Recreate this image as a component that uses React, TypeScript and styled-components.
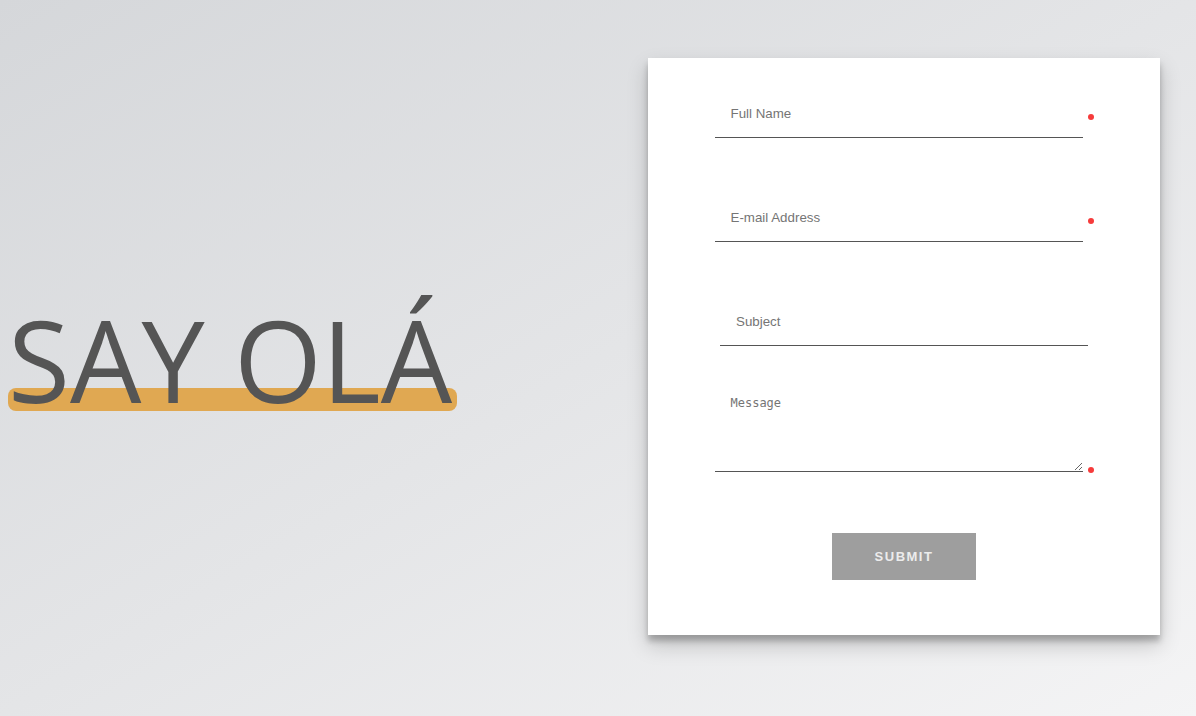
import React from "react";
import styled, { createGlobalStyle } from "styled-components";

const Global = createGlobalStyle`
  html, body { margin: 0; padding: 0; height: 100%; }
  body {
    background: linear-gradient(to bottom right, #d5d7da 0%, #e4e5e7 50%, #f4f4f5 100%);
    font-family: "Liberation Sans", Arial, sans-serif;
  }
  #root { min-height: 100%; }
`;

const Page = styled.main`
  display: flex;
  align-items: flex-start;
  min-height: 716px;
  box-sizing: border-box;
  padding: 58px 36px 0 8px;
`;

const Title = styled.h1`
  position: relative;
  margin: 245px 0 0 0;
  font-family: "Open Sans", sans-serif;
  font-weight: 400;
  font-size: 113px;
  line-height: 113px;
  color: #555555;
  white-space: nowrap;
  z-index: 0;

  &::before {
    content: "";
    position: absolute;
    left: 0;
    width: 449px;
    bottom: 5px;
    height: 23px;
    border-radius: 8px;
    background: #e0a852;
    z-index: -1;
  }
`;

const Card = styled.form`
  margin-left: auto;
  width: 512px;
  box-sizing: border-box;
  padding: 31px 0 55px;
  background: #ffffff;
  box-shadow: 0 10px 20px rgba(0, 0, 0, 0.19), 0 6px 6px rgba(0, 0, 0, 0.23);
  display: flex;
  flex-direction: column;
  align-items: center;
`;

const Row = styled.div<{ $gap: number; $end?: boolean }>`
  display: flex;
  align-items: ${(p) => (p.$end ? "flex-end" : "center")};
  gap: 5px;
  margin-bottom: ${(p) => p.$gap}px;
`;

const Field = styled.input`
  width: 368px;
  height: 49px;
  box-sizing: border-box;
  padding: 16px;
  border: none;
  border-bottom: 1px solid #555555;
  outline: none;
  background: transparent;
  font-family: "Liberation Sans", Arial, sans-serif;
  font-size: 13.333px;
  color: #333;

  &::placeholder { color: #757575; }
`;

const Area = styled.textarea`
  display: block;
  width: 368px;
  height: 92px;
  box-sizing: border-box;
  padding: 16px;
  border: none;
  border-bottom: 1px solid #555555;
  outline: none;
  background: transparent;
  font-family: "DejaVu Sans Mono", "Liberation Mono", monospace;
  font-size: 12px;
  color: #333;

  &::placeholder { color: #757575; }
`;

const Dot = styled.span<{ $end?: boolean }>`
  width: 6px;
  height: 6px;
  border-radius: 50%;
  background: #f63b3b;
  margin-top: ${(p) => (p.$end ? "0" : "6px")};
  margin-bottom: ${(p) => (p.$end ? "-1px" : "0")};
`;

const Submit = styled.button`
  width: 144px;
  height: 47px;
  border: none;
  background: #9e9e9e;
  color: #ececec;
  font-family: "Liberation Sans", Arial, sans-serif;
  font-weight: 700;
  font-size: 13px;
  letter-spacing: 1.5px;
  text-transform: uppercase;
  cursor: pointer;
`;

export default function App() {
  return (
    <>
      <Global />
      <Page>
        <Title>SAY OLÁ</Title>
        <Card onSubmit={(e) => e.preventDefault()}>
          <Row $gap={55}>
            <Field type="text" placeholder="Full Name" />
            <Dot />
          </Row>
          <Row $gap={55}>
            <Field type="email" placeholder="E-mail Address" />
            <Dot />
          </Row>
          <Row $gap={34}>
            <Field type="text" placeholder="Subject" />
          </Row>
          <Row $gap={61} $end>
            <Area placeholder="Message" />
            <Dot $end />
          </Row>
          <Submit type="submit">Submit</Submit>
        </Card>
      </Page>
    </>
  );
}
